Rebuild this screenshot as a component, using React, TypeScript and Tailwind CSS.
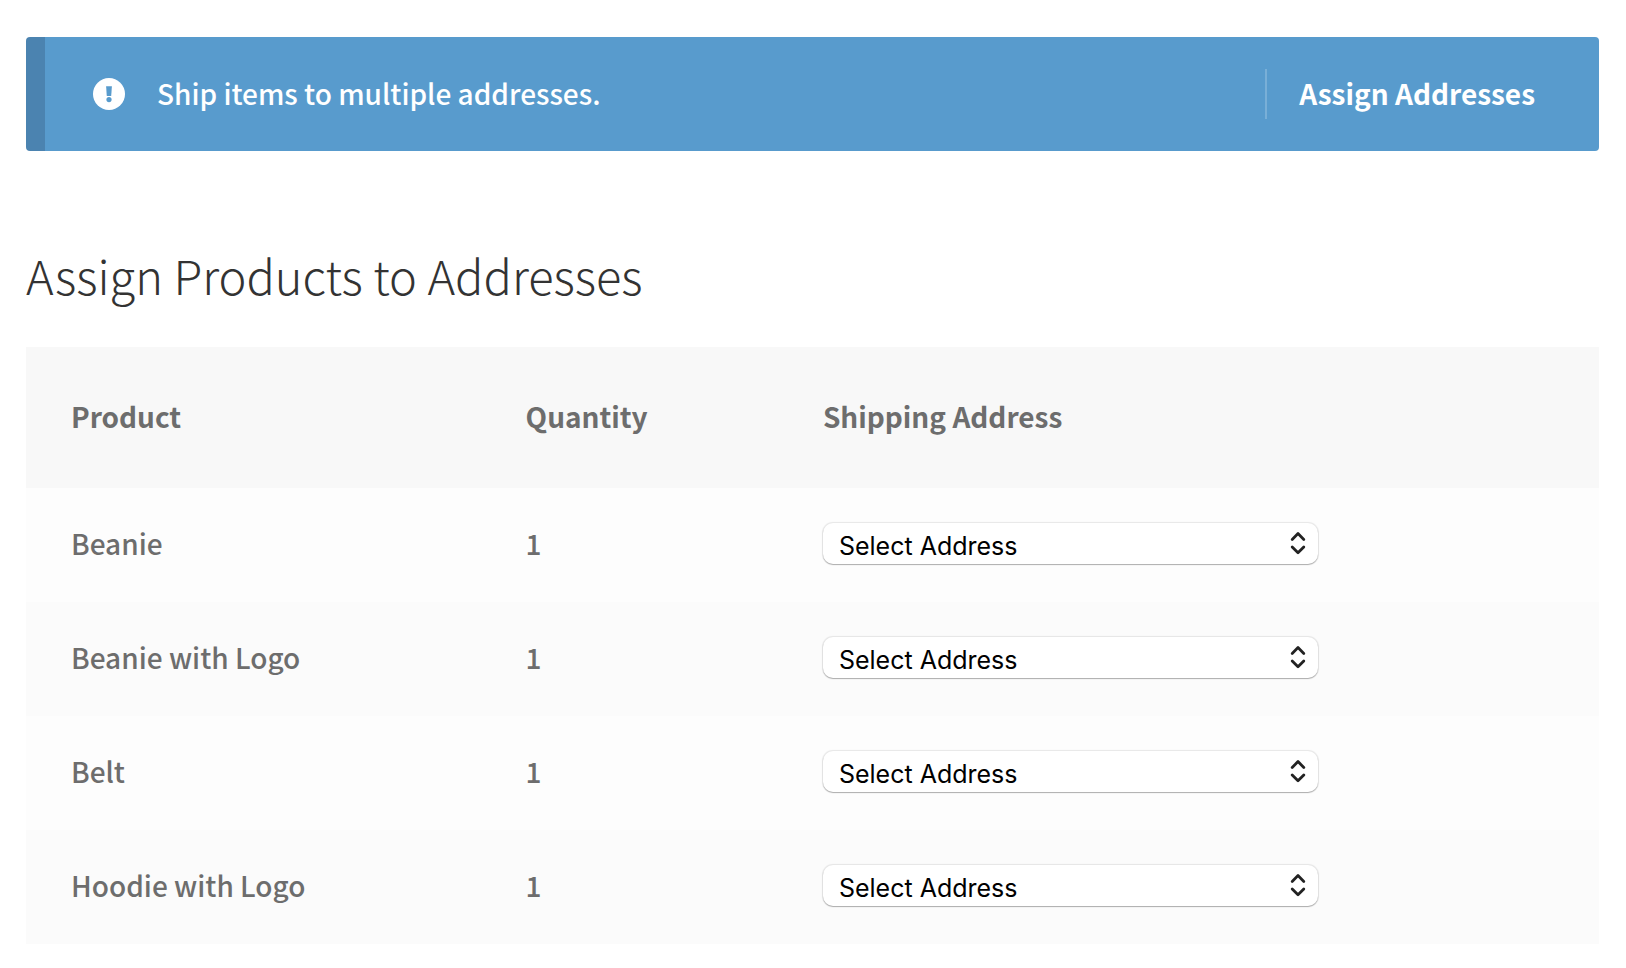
import React from "react";

interface Product {
  id: string;
  name: string;
  quantity: number;
}

const products: Product[] = [
  { id: "beanie", name: "Beanie", quantity: 1 },
  { id: "beanie-with-logo", name: "Beanie with Logo", quantity: 1 },
  { id: "belt", name: "Belt", quantity: 1 },
  { id: "hoodie-with-logo", name: "Hoodie with Logo", quantity: 1 },
];

const Notice: React.FC = () => (
  <div
    role="status"
    className="flex items-center rounded border-l-[19px] border-[#4b83b0] bg-[#589bcd] py-8 pl-12 pr-16 text-white"
  >
    <svg viewBox="0 0 32 32" className="mr-8 h-8 w-8 shrink-0" aria-hidden="true">
      <circle cx="16" cy="16" r="16" fill="#fff" />
      <path d="M13.1 8.2h5.8l-.7 9.8h-4.4z" fill="#589bcd" />
      <circle cx="16" cy="21.6" r="2.6" fill="#589bcd" />
    </svg>
    <p className="grow pb-0.5">Ship items to multiple addresses.</p>
    <a href="#assign" className="border-l-2 border-[#79afd7] pb-0.5 pl-8 font-bold leading-[48px]">
      Assign Addresses
    </a>
  </div>
);

const AddressSelect: React.FC<{ product: Product }> = ({ product }) => (
  <div className="relative h-[41px] w-[495px] max-w-full">
    <select
      id={`address-${product.id}`}
      aria-label={`Shipping address for ${product.name}`}
      className="block h-full w-full appearance-none rounded-[10px] bg-white pl-4 pr-12 pt-1.5 font-['Inter',sans-serif] text-[25px] font-normal leading-8 text-black shadow-[0_0_1px_1px_rgba(0,0,0,0.09),0_1px_1px_rgba(0,0,0,0.25)]"
    >
      <option>Select Address</option>
    </select>
    <svg
      viewBox="0 0 16 24"
      className="pointer-events-none absolute right-3 top-2 h-6 w-4"
      fill="none"
      stroke="#222"
      strokeWidth="2.8"
      strokeLinecap="round"
      strokeLinejoin="round"
      aria-hidden="true"
    >
      <path d="M2.2 8.4 8 2.6l5.8 5.8M2.2 16 8 21.8l5.8-5.8" />
    </svg>
  </div>
);

export default function App() {
  return (
    <main className="bg-white pb-6 pl-[26px] pr-[27px] pt-[37px] font-['Noto_Sans_CJK_SC',sans-serif] text-[28px] font-medium leading-[42px]">
      <Notice />

      <h1 id="assign" className="mt-[92px] text-[47px] font-light leading-[64px] text-[#333]">
        Assign Products to Addresses
      </h1>

      <table className="mt-10 w-full table-fixed text-left text-[#6d6d6d]">
        <thead className="bg-[#f8f8f8]">
          <tr className="h-[141px]">
            <th scope="col" className="w-[28.9%] pb-1 pl-[45px] font-bold">Product</th>
            <th scope="col" className="w-[18.9%] pb-1 pl-[45px] font-bold">Quantity</th>
            <th scope="col" className="pb-1 pl-[45px] font-bold">Shipping Address</th>
          </tr>
        </thead>
        <tbody>
          {products.map((product) => (
            <tr key={product.id} className="h-[114px] bg-[#fdfdfd] even:bg-[#fbfbfb]">
              <td className="pb-1 pl-[45px]">{product.name}</td>
              <td className="pb-1 pl-[45px]">{product.quantity}</td>
              <td className="pb-1 pl-[45px]">
                <AddressSelect product={product} />
              </td>
            </tr>
          ))}
        </tbody>
      </table>
    </main>
  );
}
